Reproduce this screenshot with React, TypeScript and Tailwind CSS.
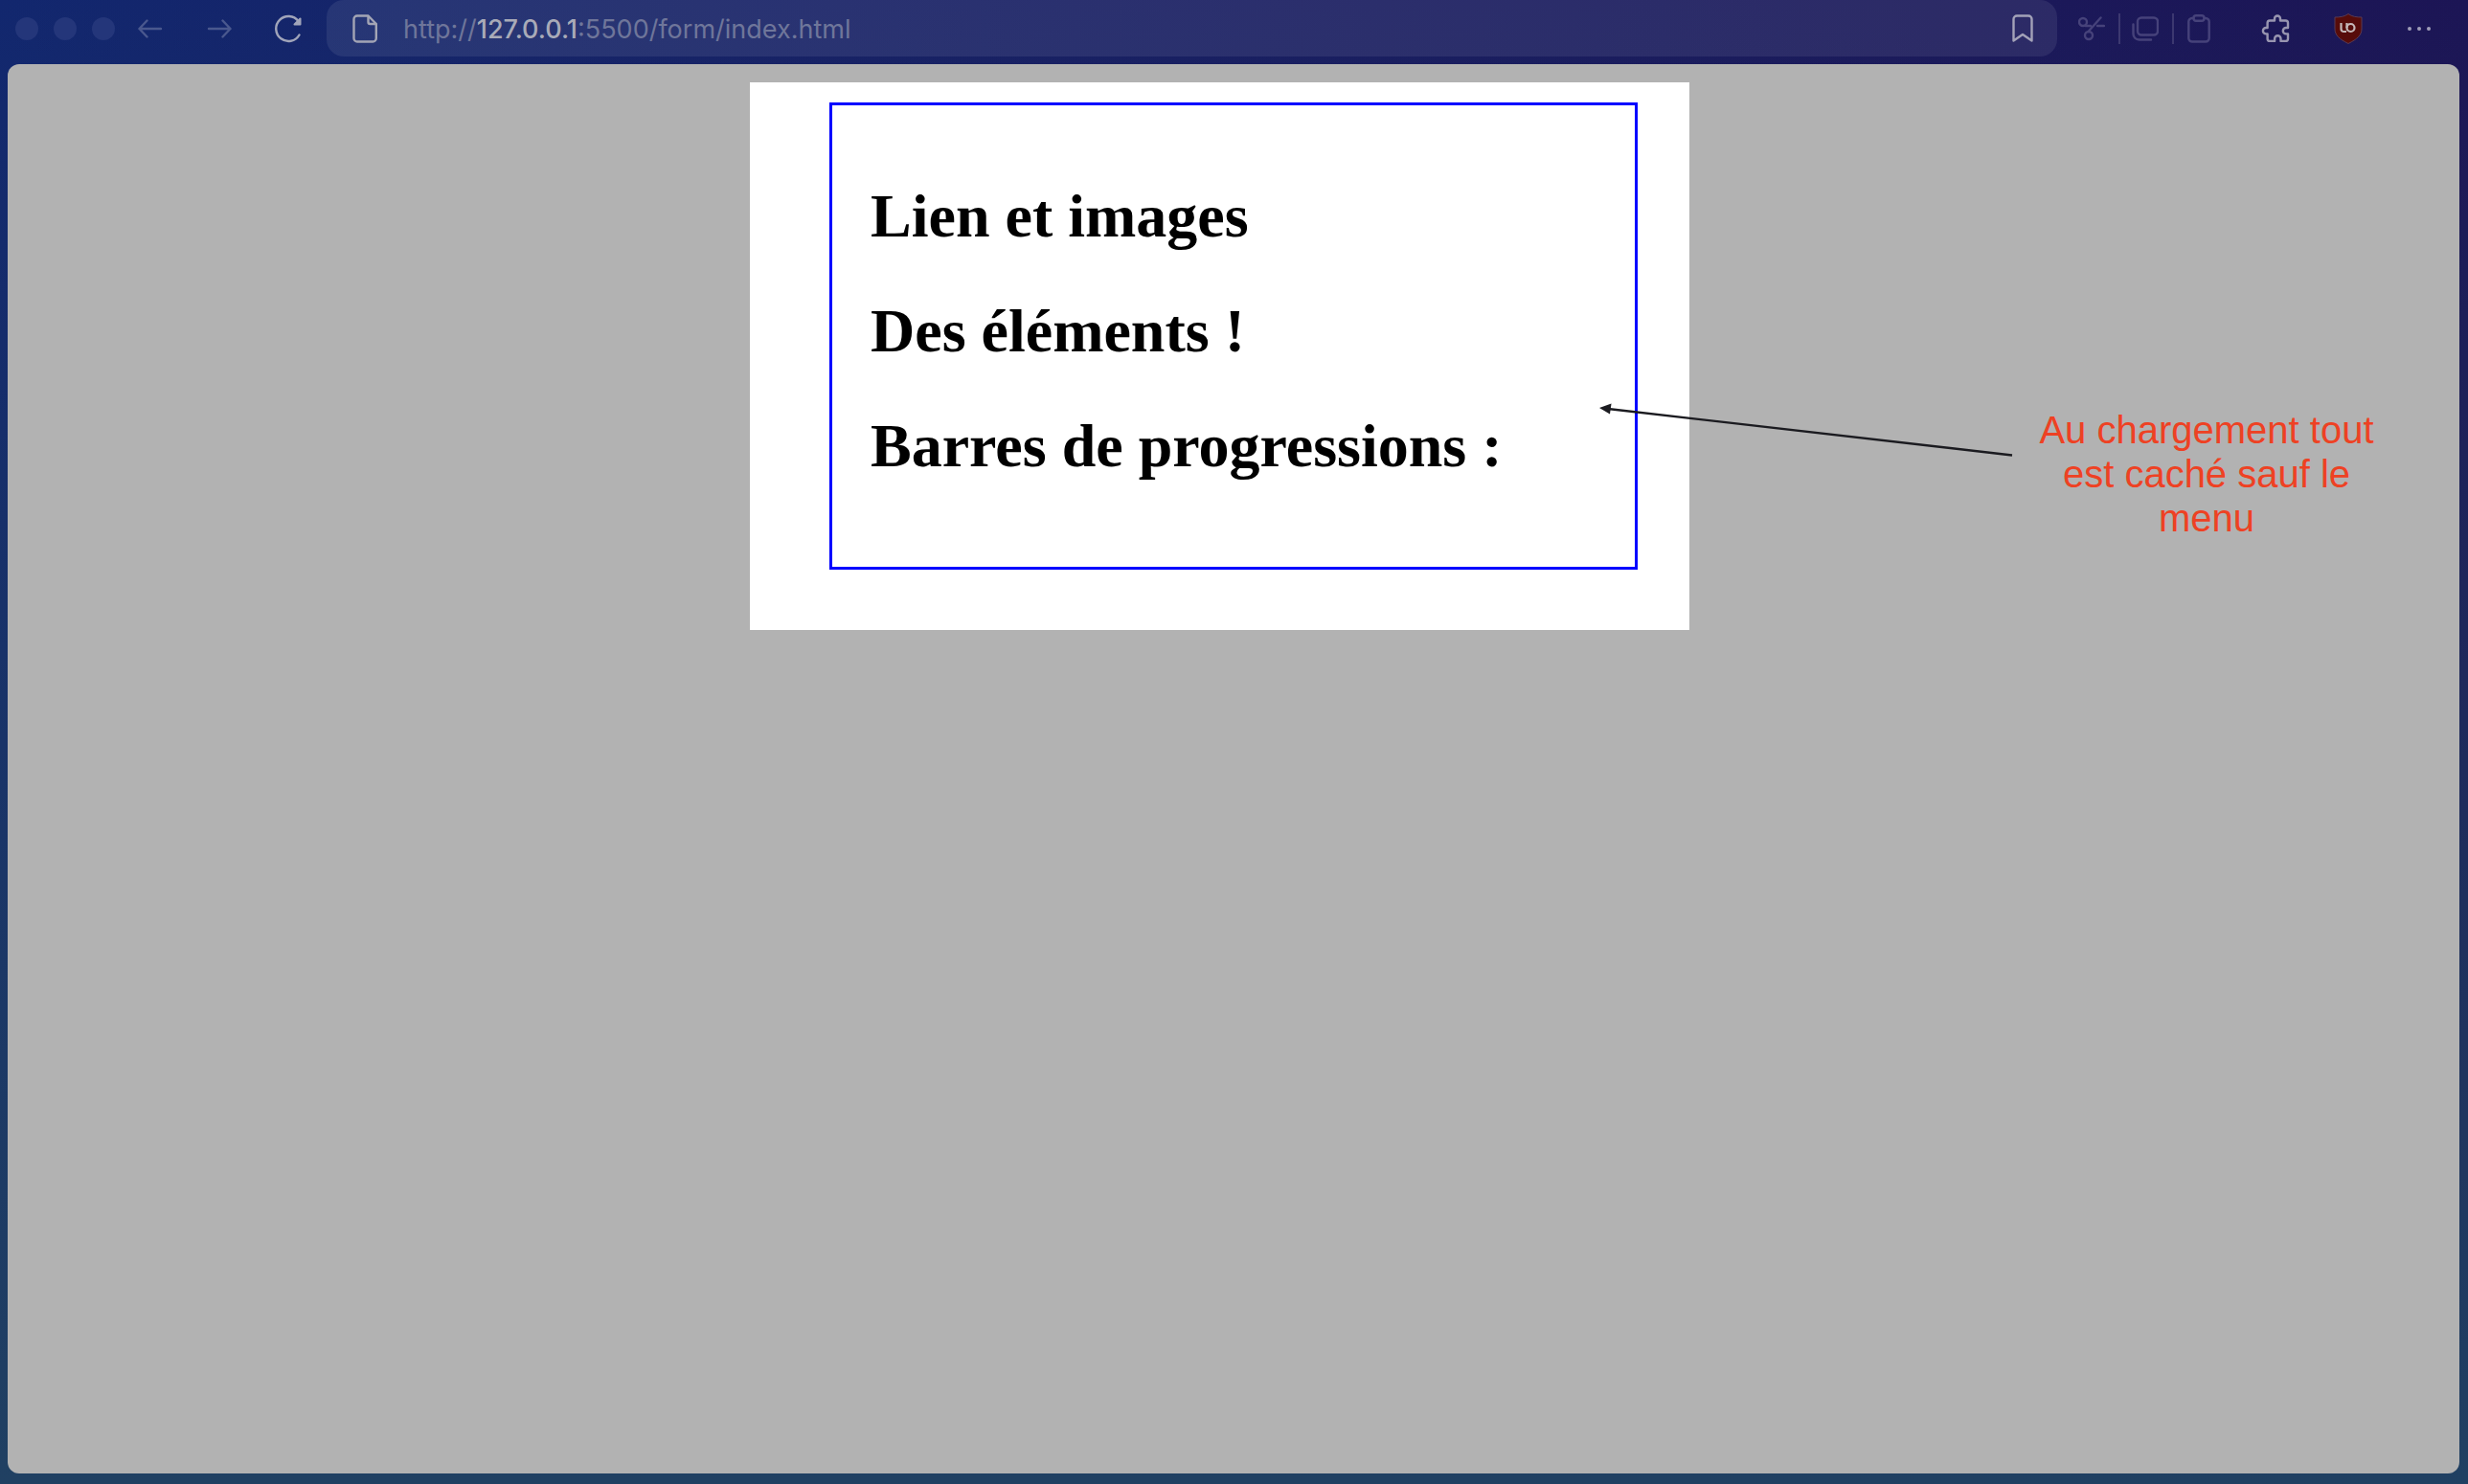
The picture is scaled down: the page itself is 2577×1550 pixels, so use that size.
import React from 'react';

const headings = ['Lien et images', 'Des éléments !', 'Barres de progressions :'];

function Svg({ w, h, sw = 2.4, children }: { w: number; h: number; sw?: number; children: React.ReactNode }) {
  return (
    <svg width={w} height={h} viewBox={`0 0 ${w} ${h}`} fill="none" stroke="currentColor" strokeWidth={sw} strokeLinecap="round" strokeLinejoin="round" aria-hidden="true" className="block shrink-0">
      {children}
    </svg>
  );
}

function AddressBar() {
  return (
    <div className="ml-[26px] flex h-[59px] min-w-0 flex-1 items-center rounded-[18px] bg-white/8 pr-[25px] pl-[27px]">
      <span className="text-[#a3a5b5]">
        <Svg w={26} h={30}>
          <path d="M5 1.500h11.500l8.300 8.500v15a3.500 3.500 0 0 1-3.500 3.500h-16.300a3.500 3.500 0 0 1-3.500-3.500v-20a3.500 3.500 0 0 1 3.500-3.500z" />
          <path d="M16.500 2v6a2 2 0 0 0 2 2h6" />
        </Svg>
      </span>
      <button type="button" aria-label="Adresse" className="ml-[27px] flex-1 pt-0.5 text-left font-['Inter',sans-serif] text-[27px] leading-8 whitespace-nowrap text-[#6f769a]">
        http://<span className="font-medium text-[#a9abb8]">127.0.0.1</span>:5500/form/index.html
      </button>
      <button type="button" aria-label="Ajouter un signet" className="text-[#a3a2b8]">
        <Svg w={22} h={30}>
          <path d="M1.500 27.500v-22.500a3.500 3.500 0 0 1 3.500-3.500h12a3.500 3.500 0 0 1 3.500 3.500v22.500l-9.500-6.500z" />
        </Svg>
      </button>
    </div>
  );
}

function Toolbar() {
  return (
    <header className="flex h-[67px] items-start">
      <div className="flex h-[59px] shrink-0 items-center gap-4 pl-4">
        <button type="button" aria-label="Fermer" className="size-6 rounded-full bg-[#24367a]" />
        <button type="button" aria-label="Réduire" className="size-6 rounded-full bg-[#24367a]" />
        <button type="button" aria-label="Agrandir" className="size-6 rounded-full bg-[#24367a]" />
      </div>
      <div className="flex h-[59px] shrink-0 items-center pl-6 text-[#4a588e]">
        <button type="button" aria-label="Précédent">
          <Svg w={26} h={20}><path d="M24 10H1.500M9.500 1.500L1.500 10l8 8.500" /></Svg>
        </button>
        <button type="button" aria-label="Suivant" className="ml-[46px]">
          <Svg w={26} h={20}><path d="M2 10h22.500M16.500 1.500l8 8.500-8 8.500" /></Svg>
        </button>
        <button type="button" aria-label="Recharger" className="ml-[45px] text-[#a1a5ba]">
          <Svg w={28} h={30}>
            <path d="M25.500 21.500a13 13 0 1 1 -1-14.500" />
            <path d="M26.500 4.500v6h-6z" fill="currentColor" strokeWidth={2} />
          </Svg>
        </button>
      </div>
      <AddressBar />
      <div className="flex h-[59px] shrink-0 items-center pl-[22px] text-[#46427a]">
        <button type="button" aria-label="Couper">
          <Svg w={28} h={26}>
            <circle cx="5" cy="6" r="4" />
            <circle cx="11" cy="20" r="4" />
            <path d="M7.500 10h5.500M10.500 16L23.500 1.500M20 10h7" />
          </Svg>
        </button>
        <span className="mx-[14px] h-8 w-0.5 bg-[#3c3870]" />
        <button type="button" aria-label="Copier" className="-ml-0.5">
          <Svg w={28} h={26}>
            <rect x="6" y="1.500" width="21" height="18" rx="4" />
            <path d="M1.500 8.500v10a6 6 0 0 0 6 6h12.500" />
          </Svg>
        </button>
        <span className="mx-[14px] h-8 w-0.5 bg-[#3c3870]" />
        <button type="button" aria-label="Coller">
          <Svg w={24} h={30}>
            <path d="M6.500 4h-1.500a3.700 3.700 0 0 0-3.700 4v16.500a3.700 3.700 0 0 0 3.700 4h14a3.700 3.700 0 0 0 3.700-4v-16.500a3.700 3.700 0 0 0-3.700-4h-1.500" />
            <rect x="6.500" y="1.200" width="11" height="5.600" rx="2.500" />
          </Svg>
        </button>
        <button type="button" aria-label="Extensions" className="ml-[53px] text-[#9895b0]">
          <Svg w={30} h={30}>
            <path d="M9 6.500h5v-2a3 3 0 0 1 6 0v2h5.500a2.500 2.500 0 0 1 2.500 2.500v5h-2a3.200 3.200 0 0 0 0 6.400h2v5a2.500 2.500 0 0 1-2.500 2.500h-5v-2.500a3.200 3.200 0 0 0-6.400 0v2.500h-5a2.500 2.500 0 0 1-2.500-2.500v-5h-1.500a3.200 3.200 0 0 1 0-6.400h1.500v-5a2.500 2.500 0 0 1 2.400-2.500z" />
          </Svg>
        </button>
        <button type="button" aria-label="uBlock Origin" className="ml-[46px]">
          <svg width="30" height="32" viewBox="0 0 30 32" fill="none" aria-hidden="true" className="block">
            <path d="M15 .5C11 3.500 6 4 1 4v12c0 7 5 11 14 15.500 9-4.500 14-8.500 14-15.500V4c-5 0-10-.5-14-3.500z" fill="#570c0a" stroke="#5a3a52" />
            <path d="M7.500 10v6a2.800 2.800 0 0 0 3 3h2.500M13.500 10v5" stroke="#c5b8b8" strokeWidth="2.200" />
            <circle cx="17.500" cy="15" r="4" stroke="#c5b8b8" strokeWidth="2.200" />
          </svg>
        </button>
        <button type="button" aria-label="Menu" className="mr-[39px] ml-[47px] flex h-6 items-center gap-1.5 text-[#a09db8]">
          <span className="size-1 rounded-full bg-current" />
          <span className="size-1 rounded-full bg-current" />
          <span className="size-1 rounded-full bg-current" />
        </button>
      </div>
    </header>
  );
}

function Note() {
  return (
    <aside className="relative mt-[359px] mr-[45px] w-[380px] self-start text-center font-['Liberation_Sans',sans-serif] text-[40px] leading-[46px] text-[#ee4123]">
      <p>Au chargement tout est caché sauf le menu</p>
      <svg width="434" height="60" viewBox="0 0 434 60" className="absolute -top-1.5 right-full mr-[11px]" aria-hidden="true">
        <path d="M10 7L432 55.500" stroke="#1b1b20" strokeWidth="2.400" />
        <path d="M1 6L13.500 1.500L12 12.500z" fill="#1b1b20" />
      </svg>
    </aside>
  );
}

export default function App() {
  return (
    <div className="flex min-h-screen flex-col bg-linear-to-r from-[#12276e] to-[#1c1555]">
      <div className="flex min-h-screen flex-col bg-linear-to-b from-[#204062]/0 to-[#204062]">
        <Toolbar />
        <main className="mr-[9px] mb-[11px] ml-2 grid flex-1 grid-cols-[1fr_981px_1fr] items-start rounded-xl bg-[#b2b2b2] pr-[29px]">
          <section className="col-start-2 mt-[19px] bg-white pt-[21px] pr-[54px] pb-[63px] pl-[83px]">
            <div className="flex flex-col gap-[46px] border-3 border-[#0000ff] px-10 pt-[79px] pb-[89px] font-['Liberation_Serif',serif] text-[64px] leading-[74px] font-bold whitespace-nowrap text-black">
              {headings.map((h) => <h1 key={h}>{h}</h1>)}
            </div>
          </section>
          <div className="flex justify-end">
            <Note />
          </div>
        </main>
      </div>
    </div>
  );
}
